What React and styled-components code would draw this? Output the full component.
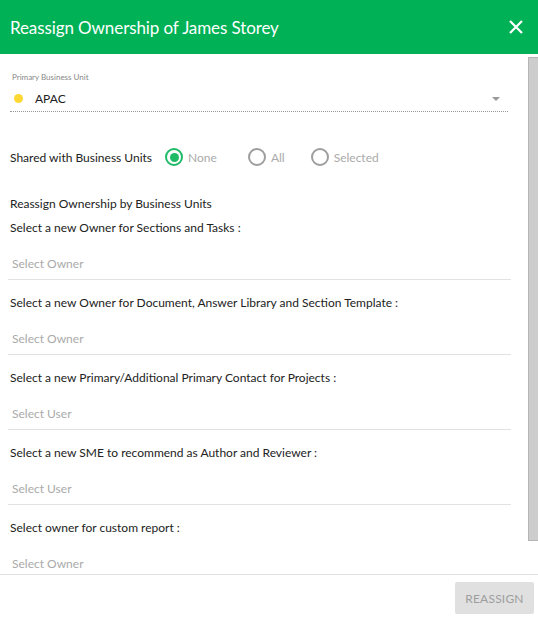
import styled, { createGlobalStyle } from "styled-components";

const GlobalStyle = createGlobalStyle`
  html, body {
    margin: 0;
    padding: 0;
    background: #fff;
  }
  body {
    font-family: Lato, "Liberation Sans", sans-serif;
  }
`;

const Modal = styled.div`
  width: 538px;
  height: 620px;
  display: flex;
  flex-direction: column;
  background: #fff;
  overflow: hidden;
`;

const Header = styled.div`
  height: 54px;
  flex-shrink: 0;
  background: #00b156;
  display: flex;
  align-items: center;
  justify-content: space-between;
  padding: 0 14px 0 10px;
  color: #fff;
`;

const Title = styled.h1`
  margin: 0;
  font-size: 17px;
  font-weight: 400;
  letter-spacing: -0.1px;
`;

const CloseButton = styled.button`
  border: 0;
  background: none;
  padding: 0;
  width: 16px;
  height: 16px;
  display: flex;
  color: #fff;
  cursor: pointer;
`;

const ScrollArea = styled.div`
  flex: 1;
  min-height: 0;
  display: flex;
`;

const Content = styled.div`
  flex: 1;
  overflow: hidden;
  padding: 0 17px 0 8px;
`;

const ScrollTrack = styled.div`
  width: 10px;
  flex-shrink: 0;
  padding-top: 3px;
`;

const ScrollThumb = styled.div`
  height: 482px;
  background: #cdcdcd;
  border-left: 1px solid #b5b5b5;
  border-top: 1px solid #b5b5b5;
  border-bottom: 1px solid #b5b5b5;
`;

const UnitField = styled.div`
  padding-top: 18px;
  border-bottom: 1px dotted #999;
  padding-bottom: 5px;
  margin: 0 3px 0 2px;
`;

const SmallLabel = styled.div`
  font-size: 8px;
  color: #888;
  margin-left: 2px;
  margin-bottom: 9px;
`;

const UnitRow = styled.div`
  display: flex;
  align-items: center;
  gap: 12px;
  padding-left: 4px;
  font-size: 12px;
  color: #222;
`;

const Dot = styled.span`
  width: 9px;
  height: 9px;
  border-radius: 50%;
  background: ${(p) => p.$color};
`;

const Caret = styled.span`
  margin-left: auto;
  margin-right: 8px;
  width: 0;
  height: 0;
  border-left: 4px solid transparent;
  border-right: 4px solid transparent;
  border-top: 4px solid #999;
`;

const SharedRow = styled.div`
  display: flex;
  align-items: center;
  margin: 36px 0 0 2px;
  font-size: 12px;
  color: #222;
`;

const SharedLabel = styled.span`
  margin-right: 13px;
`;

const RadioOption = styled.label`
  display: flex;
  align-items: center;
  gap: 5px;
  margin-right: ${(p) => p.$space}px;
  color: #aaa;
`;

const RadioCircle = styled.span`
  width: 14px;
  height: 14px;
  border-radius: 50%;
  border: 2px solid ${(p) => (p.$checked ? "#1fba66" : "#9e9e9e")};
  display: flex;
  align-items: center;
  justify-content: center;

  &::after {
    content: "";
    width: 9px;
    height: 9px;
    border-radius: 50%;
    background: ${(p) => (p.$checked ? "#1fba66" : "transparent")};
  }
`;

const SectionTitle = styled.div`
  margin: 30px 0 0 2px;
  font-size: 12px;
  color: #222;
`;

const OwnerField = styled.div`
  display: flex;
  flex-direction: column;
`;

const FieldLabel = styled.div`
  font-size: 12px;
  color: #222;
  height: 15px;
  margin: ${(p) => (p.$first ? "9px" : "15px")} 0 0 2px;
`;

const Placeholder = styled.div`
  font-size: 12px;
  color: #aaa;
  padding: 21px 4px 0;
  height: 23px;
  border-bottom: 1px solid #e2e2e2;
`;

const Footer = styled.div`
  height: 46px;
  flex-shrink: 0;
  border-top: 1px solid #e2e2e2;
  display: flex;
  justify-content: flex-end;
  align-items: flex-start;
  padding: 7px 4px 0 0;
  box-sizing: border-box;
`;

const ReassignButton = styled.button`
  width: 79px;
  height: 32px;
  border: 0;
  border-radius: 2px;
  background: #e0e0e0;
  color: #9e9e9e;
  font-family: inherit;
  font-size: 12px;
  letter-spacing: 0.2px;
`;

const fields = [
  { label: "Select a new Owner for Sections and Tasks :", placeholder: "Select Owner" },
  { label: "Select a new Owner for Document, Answer Library and Section Template :", placeholder: "Select Owner" },
  { label: "Select a new Primary/Additional Primary Contact for Projects :", placeholder: "Select User" },
  { label: "Select a new SME to recommend as Author and Reviewer :", placeholder: "Select User" },
  { label: "Select owner for custom report :", placeholder: "Select Owner" },
];

const options = [
  { name: "None", space: 31 },
  { name: "All", space: 26 },
  { name: "Selected", space: 0 },
];

export default function App() {
  return (
    <Modal>
      <GlobalStyle />
      <Header>
        <Title>Reassign Ownership of James Storey</Title>
        <CloseButton aria-label="Close">
          <svg width="16" height="16" viewBox="0 0 16 16">
            <path d="M2 2L14 14M14 2L2 14" stroke="#fff" strokeWidth="2.2" />
          </svg>
        </CloseButton>
      </Header>
      <ScrollArea>
        <Content>
          <UnitField>
            <SmallLabel>Primary Business Unit</SmallLabel>
            <UnitRow>
              <Dot $color="#fdd835" />
              APAC
              <Caret />
            </UnitRow>
          </UnitField>
          <SharedRow>
            <SharedLabel>Shared with Business Units</SharedLabel>
            {options.map((o, i) => (
              <RadioOption key={o.name} $space={o.space}>
                <RadioCircle $checked={i === 0} />
                {o.name}
              </RadioOption>
            ))}
          </SharedRow>
          <SectionTitle>Reassign Ownership by Business Units</SectionTitle>
          {fields.map((f, i) => (
            <OwnerField key={f.label}>
              <FieldLabel $first={i === 0}>{f.label}</FieldLabel>
              <Placeholder>{f.placeholder}</Placeholder>
            </OwnerField>
          ))}
        </Content>
        <ScrollTrack>
          <ScrollThumb />
        </ScrollTrack>
      </ScrollArea>
      <Footer>
        <ReassignButton disabled>REASSIGN</ReassignButton>
      </Footer>
    </Modal>
  );
}
